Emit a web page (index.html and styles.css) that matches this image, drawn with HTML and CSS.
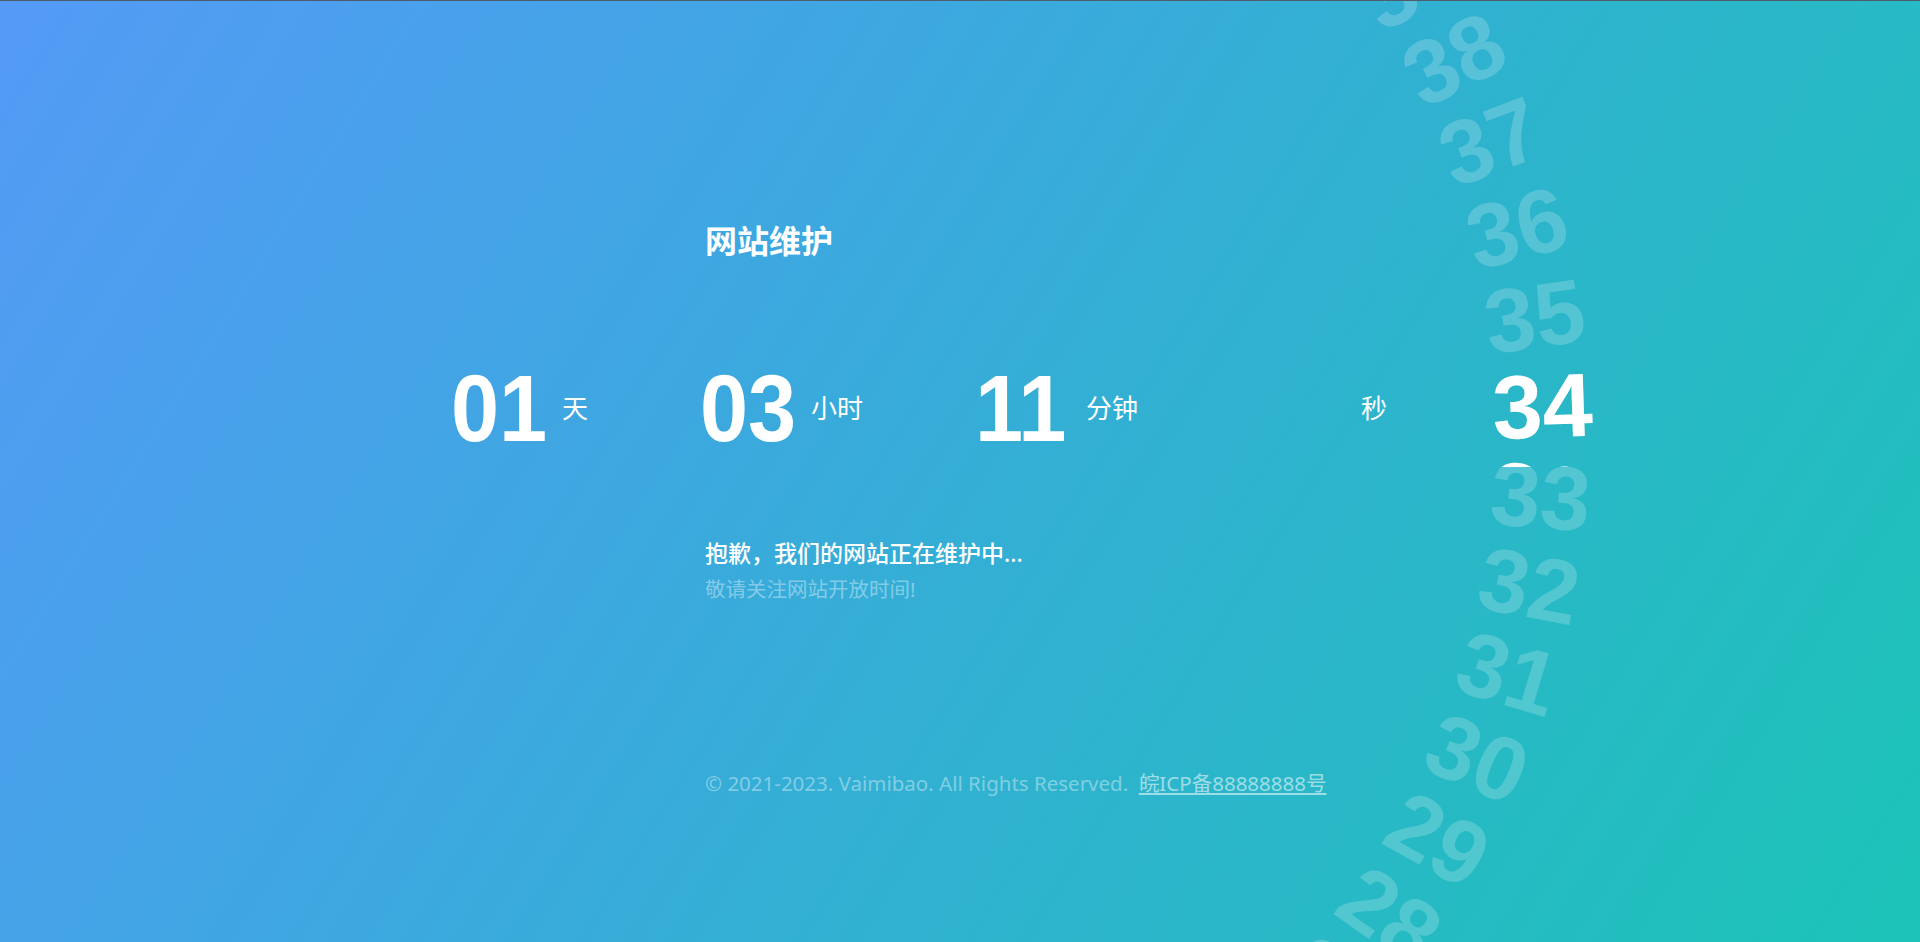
FILE: index.html
```html
<!DOCTYPE html>
<html lang="zh-CN">
<head>
<meta charset="utf-8">
<title>网站维护</title>
<link rel="stylesheet" href="styles.css">
</head>
<body>
<main class="page">
  <div class="content">
    <h1 class="title">网站维护</h1>
    <div class="countdown">
      <div class="unit"><span class="num">01</span><span class="label">天</span></div>
      <div class="unit"><span class="num">03</span><span class="label">小时</span></div>
      <div class="unit"><span class="num">11</span><span class="label">分钟</span></div>
      <div class="unit"><span class="num num-slot"></span><span class="label">秒</span></div>
    </div>
    <p class="msg">抱歉，我们的网站正在维护中...</p>
    <p class="sub">敬请关注网站开放时间!</p>
    <footer class="footer">© 2021-2023. Vaimibao. All Rights Reserved. &nbsp;<a class="icp" href="#">皖ICP备88888888号</a></footer>
  </div>
</main>
<div class="wheel wheel-faint" aria-hidden="true">
  <div class="wheel-num" style="--i:-5"><span>39</span></div>
  <div class="wheel-num" style="--i:-4"><span>38</span></div>
  <div class="wheel-num" style="--i:-3"><span>37</span></div>
  <div class="wheel-num" style="--i:-2"><span>36</span></div>
  <div class="wheel-num" style="--i:-1"><span>35</span></div>
  <div class="wheel-num" style="--i:0"><span>34</span></div>
  <div class="wheel-num" style="--i:1"><span>33</span></div>
  <div class="wheel-num" style="--i:2"><span>32</span></div>
  <div class="wheel-num" style="--i:3"><span>31</span></div>
  <div class="wheel-num" style="--i:4"><span>30</span></div>
  <div class="wheel-num" style="--i:5"><span>29</span></div>
  <div class="wheel-num" style="--i:6"><span>28</span></div>
  <div class="wheel-num" style="--i:7"><span>27</span></div>
</div>
<div class="wheel wheel-active">
  <div class="wheel-num" style="--i:-1"><span aria-hidden="true">35</span></div>
  <div class="wheel-num" style="--i:0"><span>34</span></div>
  <div class="wheel-num" style="--i:1"><span aria-hidden="true">33</span></div>
</div>
</body>
</html>
```
FILE: styles.css
```css
html, body {
  margin: 0;
  padding: 0;
}
body {
  position: relative;
  height: 941px;
  overflow: hidden;
  border-top: 1px solid #4f5d6b;
  background: linear-gradient(122deg, #549af6 0%, #3ca8df 38%, #2eb3ce 62%, #1cc3b7 100%);
  font-family: "Noto Sans", "Noto Sans CJK SC", sans-serif;
  color: #fff;
}
.page {
  display: flex;
  flex-direction: column;
}
.content {
  margin-left: 705px;
  display: flex;
  flex-direction: column;
}
.title {
  margin: 218px 0 0;
  font-family: "Noto Sans CJK SC", sans-serif;
  font-size: 32px;
  line-height: 40px;
  font-weight: 700;
}
.countdown {
  margin: 102px 0 0 -254px;
  display: flex;
  gap: 112px;
  align-items: center;
}
.unit {
  display: flex;
  align-items: center;
}
.num {
  display: inline-block;
  width: 94px;
  font-family: "Liberation Sans", Arial, sans-serif;
  font-weight: 700;
  font-size: 94px;
  line-height: 95px;
  white-space: nowrap;
  transform: scaleX(0.92);
  transform-origin: left center;
  color: #fff;
}
.num-slot {
  height: 95px;
}
.label {
  margin-left: 17px;
  font-family: "Noto Sans CJK SC", sans-serif;
  font-size: 26px;
  line-height: 1;
  padding-bottom: 4px;
}
.msg {
  margin: 81px 0 0;
  font-size: 23px;
  line-height: 32px;
  font-weight: 500;
}
.sub {
  margin: 6px 0 0;
  font-size: 20.5px;
  line-height: 28px;
  color: rgba(255, 255, 255, 0.4);
}
.footer {
  margin-top: 166px;
  font-size: 20.5px;
  line-height: 28px;
  color: rgba(255, 255, 255, 0.4);
}
.icp {
  color: rgba(255, 255, 255, 0.55);
  text-decoration: underline;
}
.wheel {
  position: absolute;
  inset: 0;
  pointer-events: none;
  overflow: hidden;
}
.wheel-num {
  position: absolute;
  left: 709px;
  top: 433px;
  width: 0;
  height: 0;
  transform-origin: 0 0;
  transform: rotate(calc(var(--i) * 6.2deg - 1.9deg)) translateX(834px);
}
.wheel-num span {
  position: absolute;
  left: 0;
  top: 0;
  transform: translate(-50%, -50%);
  font-family: "Liberation Sans", Arial, sans-serif;
  font-weight: 700;
  font-size: 90px;
  line-height: 1;
  white-space: nowrap;
}
.wheel-faint {
  color: rgba(255, 255, 255, 0.2);
}
.wheel-active {
  color: #fff;
  clip-path: inset(355px 0 475px 0);
}
```
